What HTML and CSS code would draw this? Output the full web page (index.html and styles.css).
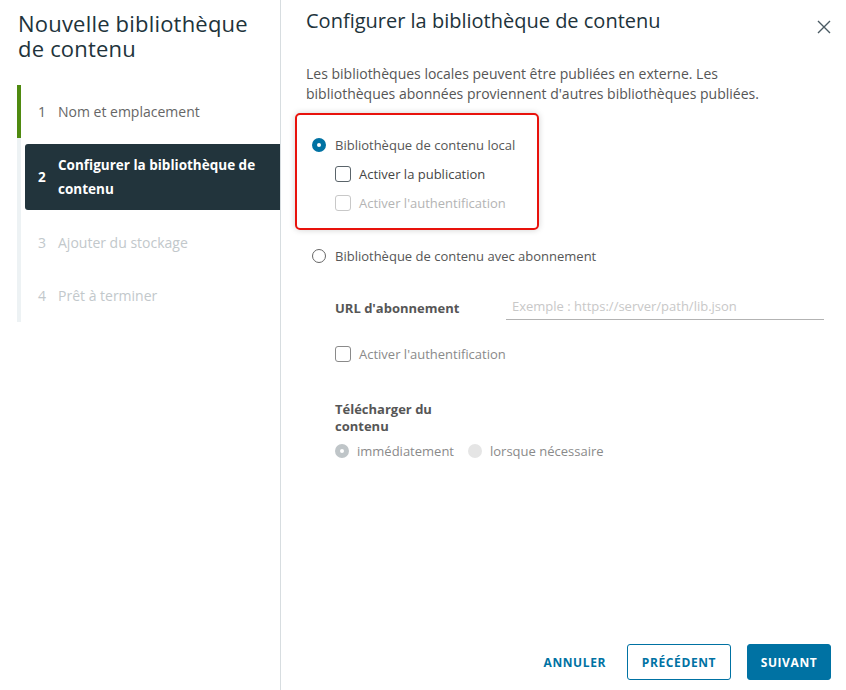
FILE: index.html
```html
<!DOCTYPE html>
<html lang="fr">
<head>
<meta charset="utf-8">
<title>Nouvelle bibliothèque de contenu</title>
<link rel="stylesheet" href="styles.css">
</head>
<body>
<div class="modal">
  <aside class="sidebar">
    <h1 class="sidebar-title">Nouvelle bibliothèque de contenu</h1>
    <ol class="steps">
      <li class="step step-done"><div class="step-box"><span class="step-num">1</span><span class="step-label">Nom et emplacement</span></div></li>
      <li class="step step-active"><div class="step-box"><span class="step-num">2</span><span class="step-label">Configurer la bibliothèque de contenu</span></div></li>
      <li class="step step-todo"><div class="step-box"><span class="step-num">3</span><span class="step-label">Ajouter du stockage</span></div></li>
      <li class="step step-todo"><div class="step-box"><span class="step-num">4</span><span class="step-label">Prêt à terminer</span></div></li>
    </ol>
  </aside>
  <main class="content">
    <header class="content-header">
      <h2 class="content-title">Configurer la bibliothèque de contenu</h2>
      <button class="close" aria-label="Fermer">
        <svg width="14" height="14" viewBox="0 0 14 14"><path d="M1 1 L13 13 M13 1 L1 13" stroke="#4a5a63" stroke-width="1.4" fill="none"/></svg>
      </button>
    </header>
    <p class="intro">Les bibliothèques locales peuvent être publiées en externe. Les bibliothèques abonnées proviennent d'autres bibliothèques publiées.</p>

    <div class="highlight">
      <div class="row"><span class="radio radio-on"></span><span class="label">Bibliothèque de contenu local</span></div>
      <div class="row sub"><span class="check"></span><span class="label label-dark">Activer la publication</span></div>
      <div class="row sub"><span class="check check-disabled"></span><span class="label label-disabled">Activer l'authentification</span></div>
    </div>

    <div class="section">
      <div class="row"><span class="radio"></span><span class="label">Bibliothèque de contenu avec abonnement</span></div>
      <div class="field sub">
        <span class="field-label">URL d'abonnement</span>
        <span class="input">Exemple : https://server/path/lib.json</span>
      </div>
      <div class="row sub auth"><span class="check check-mid"></span><span class="label label-mid">Activer l'authentification</span></div>
      <div class="download sub">
        <div class="field-label narrow">Télécharger du contenu</div>
        <div class="radios">
          <span class="radio radio-dis-on"></span><span class="label label-mid">immédiatement</span>
          <span class="radio radio-dis"></span><span class="label label-mid">lorsque nécessaire</span>
        </div>
      </div>
    </div>

    <footer class="footer">
      <button class="btn btn-flat">ANNULER</button>
      <button class="btn btn-outline">PRÉCÉDENT</button>
      <button class="btn btn-primary">SUIVANT</button>
    </footer>
  </main>
</div>
</body>
</html>
```
FILE: styles.css
```css
* { box-sizing: border-box; }
html, body { margin: 0; padding: 0; background: #fff; }
body {
  font-family: "Open Sans", "Noto Sans", sans-serif;
  color: #565656;
  width: 846px;
  height: 690px;
  overflow: hidden;
}
.modal { display: flex; height: 690px; }

.sidebar {
  width: 281px;
  border-right: 1px solid #d7dde0;
  padding-top: 11px;
}
.sidebar-title {
  margin: 0 0 24px 18px;
  width: 240px;
  font-size: 22px;
  font-weight: 400;
  line-height: 25px;
  color: #21333b;
  letter-spacing: 0.2px;
}
.steps { list-style: none; margin: 0 0 0 17px; padding: 0; }
.step {
  border-left: 4px solid #edf2f4;
  padding-left: 4px;
  height: 53px;
  display: flex;
  align-items: center;
}
.step-done { border-left-color: #4f8a10; }
.step-active { height: 78px; padding-top: 6px; padding-bottom: 6px; }
.step-box {
  display: flex;
  align-items: center;
  width: 100%;
  height: 100%;
  padding-left: 13px;
  font-size: 14px;
  color: #666;
}
.step-num { width: 20px; flex: none; }
.step-active .step-box {
  background: #22343c;
  color: #fff;
  font-weight: 700;
  font-size: 13.5px;
  border-radius: 3px 0 0 3px;
  line-height: 24px;
}
.step-active .step-label { width: 205px; }
.step-todo .step-box { color: #c2c8cb; }

.content {
  flex: 1;
  display: flex;
  flex-direction: column;
  padding: 0 15px 10px 14px;
}
.content-header {
  display: flex;
  justify-content: space-between;
  align-items: flex-start;
  padding-left: 11px;
  padding-top: 9px;
}
.content-title {
  margin: 0;
  font-size: 20px;
  font-weight: 400;
  line-height: 24px;
  color: #21333b;
}
.close {
  border: none;
  background: none;
  padding: 0;
  margin: 11px 0 0 0;
  width: 14px;
  height: 14px;
  display: block;
}
.close svg { display: block; }
.intro {
  margin: 30px 40px 0 11px;
  font-size: 14px;
  line-height: 20px;
  color: #565656;
}
.highlight {
  margin-top: 9px;
  width: 244px;
  border: 2px solid #e8120c;
  border-radius: 5px;
  padding: 15px 0 11px 15px;
  box-shadow: 0 0 6px rgba(0,0,0,0.18);
}
.row {
  display: flex;
  align-items: center;
  height: 29px;
  font-size: 13px;
}
.sub { margin-left: 23px; }
.label { margin-left: 9px; color: #565656; }
.label-dark { color: #454545; margin-left: 8px; }
.label-disabled { color: #b4b4b4; margin-left: 8px; }
.label-mid { color: #8a8a8a; margin-left: 8px; }

.radio {
  width: 14px;
  height: 14px;
  border-radius: 50%;
  border: 1px solid #666;
  flex: none;
  display: inline-block;
}
.radio-on { border: 5px solid #0072a3; background: #fff; }
.radio-dis-on { border: 5px solid #bfc5c8; background: #fff; }
.radio-dis { border: none; background: #e5e5e5; margin-left: 14px; }

.check {
  width: 16px;
  height: 16px;
  border: 1px solid #5a646a;
  border-radius: 3px;
  flex: none;
  display: inline-block;
}
.check-disabled { border-color: #c8c8c8; }
.check-mid { border-color: #8a8a8a; }

.section { padding-left: 17px; margin-top: 11px; }
.field {
  display: flex;
  align-items: flex-end;
  margin-top: 20px;
  height: 30px;
}
.field-label {
  font-size: 13px;
  font-weight: 700;
  color: #565656;
  width: 171px;
  flex: none;
  line-height: 17px;
  padding-bottom: 3px;
}
.input {
  flex: 1;
  border-bottom: 1px solid #b3b3b3;
  font-size: 13px;
  color: #c8c8c8;
  padding: 0 0 4px 6px;
  margin-right: 7px;
  line-height: 17px;
}
.auth { margin-top: 19px; }
.download { margin-top: 33px; }
.narrow { width: 130px; padding: 0; }
.radios {
  display: flex;
  align-items: center;
  height: 20px;
  margin-top: 6px;
  font-size: 13px;
}

.footer {
  margin-top: auto;
  display: flex;
  justify-content: flex-end;
  align-items: center;
  gap: 16px;
}
.btn {
  font-family: inherit;
  height: 36px;
  font-size: 12px;
  font-weight: 700;
  letter-spacing: 0.6px;
  border-radius: 3px;
  padding: 0 12px;
  cursor: pointer;
}
.btn-flat { background: none; border: none; color: #0072a3; padding: 0 5px 0 12px; }
.btn-outline { background: #fff; border: 1px solid #0072a3; color: #0072a3; width: 104px; }
.btn-primary { background: #0072a3; border: 1px solid #0072a3; color: #fff; width: 84px; }
```
